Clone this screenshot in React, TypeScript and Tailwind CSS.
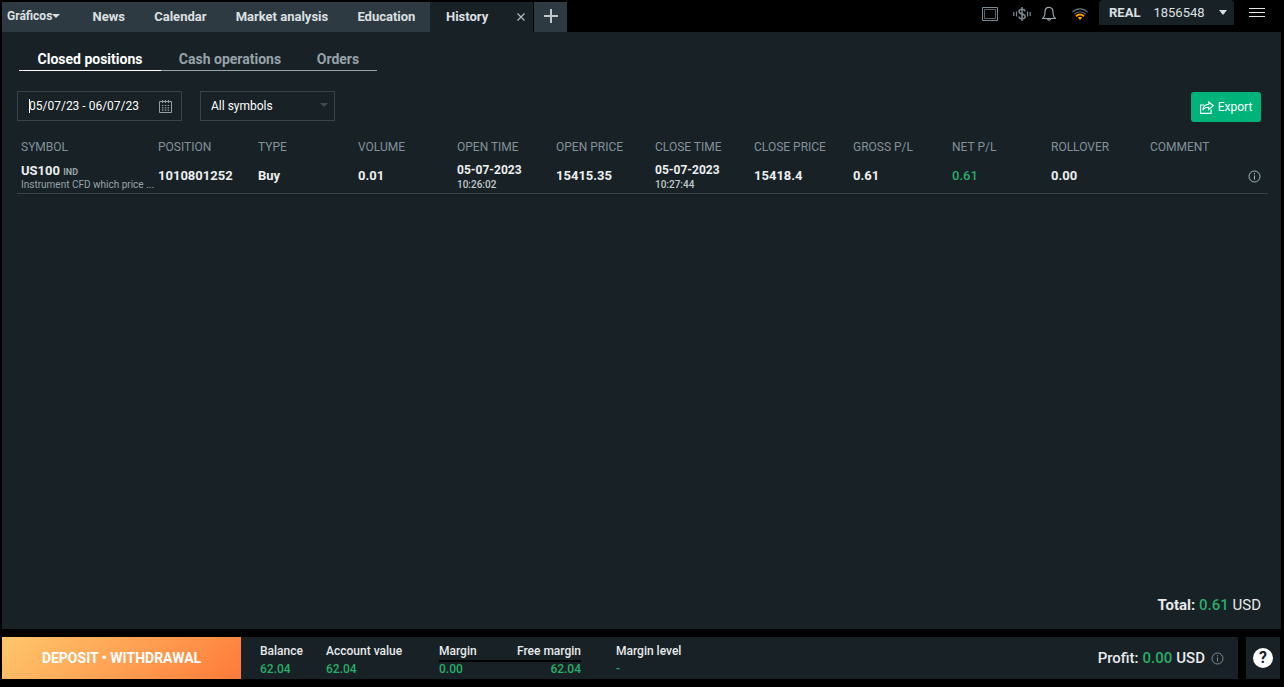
import React from 'react';

const tabs = ['News', 'Calendar', 'Market analysis', 'Education'];

const columns = [
  { label: 'Symbol', width: 'w-[137px]' },
  { label: 'Position', width: 'w-[100px]' },
  { label: 'Type', width: 'w-[100px]' },
  { label: 'Volume', width: 'w-[99px]' },
  { label: 'Open time', width: 'w-[99px]' },
  { label: 'Open price', width: 'w-[99px]' },
  { label: 'Close time', width: 'w-[99px]' },
  { label: 'Close price', width: 'w-[99px]' },
  { label: 'Gross P/L', width: 'w-[99px]' },
  { label: 'Net P/L', width: 'w-[99px]' },
  { label: 'Rollover', width: 'w-[99px]' },
  { label: 'Comment', width: '' },
];

const cell = 'pt-1 pr-0 pb-0 pl-1';
const stackedCell = 'pt-1.5 pr-0 pb-0 pl-1';

const InfoIcon = () => (
  <svg width="13" height="13" viewBox="0 0 13 13" fill="none" stroke="currentColor">
    <circle cx="6.5" cy="6.5" r="5.5" />
    <path d="M6.5 5.5v4M6.5 3.2v1.2" />
  </svg>
);

const TopBar = () => (
  <header className="flex h-8 justify-between pl-0.5">
    <nav className="flex pt-0.5 text-[13px] font-bold text-[#dde0e2]">
      <div className="flex w-[428px] bg-[#2e3a41]">
        <button className="flex w-[76px] shrink-0 items-center pb-0.5 pl-[5px] text-xs font-bold">
          Gráficos
          <svg width="8" height="4" viewBox="0 0 8 4" fill="currentColor">
            <path d="M0 0h8L4 4z" />
          </svg>
        </button>
        {tabs.map((tab) => (
          <button key={tab} className="grow px-3.5 font-bold whitespace-nowrap">{tab}</button>
        ))}
      </div>
      <div className="flex w-[103px] items-center justify-between bg-[#172126] pr-2 pl-4">
        <button className="font-bold">History</button>
        <button aria-label="Close tab">
          <svg width="8" height="8" viewBox="0 0 8 8" stroke="#b4bcc0" strokeWidth="1.2">
            <path d="M.5.5l7 7M7.5.5l-7 7" />
          </svg>
        </button>
      </div>
      <button aria-label="New tab" className="ml-px flex w-[33px] items-center justify-center bg-[#2e3a41] pb-0.5">
        <svg width="14" height="14" viewBox="0 0 14 14" stroke="#c3c8cb" strokeWidth="2">
          <path d="M7 0v14M0 7h14" />
        </svg>
      </button>
    </nav>

    <div className="flex items-start pr-[19px]">
      <div className="flex h-7 items-center text-[#7c8b94]">
        <button aria-label="Layout" className="mr-[15px]">
          <svg width="16" height="14" viewBox="0 0 16 14" fill="none" stroke="currentColor">
            <path d="M.5.5h15v13H.5z" />
            <path d="M2.500 2.500h11v9h-11z" opacity=".7" />
          </svg>
        </button>
        <button aria-label="Price alerts" className="mr-[11px]">
          <svg width="18" height="14" viewBox="0 0 18 14" fill="none" stroke="currentColor" strokeWidth="1.5">
            <path d="M9 0v14M12 4.400C11.800 3 10.700 2.300 9 2.300c-1.800 0-3 .8-3 2.200C6 6 7.200 6.500 9 7c1.900.5 3.100 1 3.100 2.500S10.800 11.800 9 11.800 6 11 5.900 9.500" />
            <path d="M3.500 4.500v5M14.500 4.500v5M.8 5v4M17.200 5v4" strokeWidth="1.2" />
          </svg>
        </button>
        <button aria-label="Notifications" className="mr-4">
          <svg width="14" height="16" viewBox="0 0 14 16" fill="none" stroke="#9ba5ab" strokeWidth="1.2">
            <path d="M7 1.300C4.300 1.300 3 3.300 3 5.800c0 3.700-.3 5.200-2.400 6.700h12.800C11.300 11 11 9.500 11 5.800c0-2.500-1.300-4.500-4-4.500z" />
            <path d="M5.300 12.700a1.800 2 0 0 0 3.400 0" />
          </svg>
        </button>
        <button aria-label="Connection" className="mr-[11px]">
          <svg width="16" height="12" viewBox="0 0 16 12" fill="none">
            <path d="M.5 4.200C4.800-.2 11.200-.2 15.500 4.200" stroke="#66737b" strokeWidth="1.200" />
            <path d="M2.400 6.200c3.200-3.300 8-3.300 11.200 0" stroke="#66737b" strokeWidth="1.100" />
            <path d="M4 8.200c2.300-2.300 5.700-2.300 8 0" stroke="#ff9c0f" strokeWidth="2" />
            <path d="M5.800 9.600c1.300-1.200 3.100-1.200 4.400 0L8 12z" fill="#ff9c0f" />
          </svg>
        </button>
      </div>
      <button className="flex h-[25px] w-[135px] items-center rounded-t bg-[#172126] px-2.5 text-[13px] text-[#dde0e2]">
        <span className="font-bold">REAL</span>
        <span className="ml-[13px]">1856548</span>
        <svg width="8" height="5" viewBox="0 0 8 5" fill="currentColor" className="-mr-[3px] ml-auto">
          <path d="M0 0h8L4 5z" />
        </svg>
      </button>
      <button aria-label="Menu" className="mt-2 ml-[15px]">
        <svg width="16" height="9" viewBox="0 0 16 9" stroke="#e3e5e6">
          <path d="M0 .5h16M0 4.500h16M0 8.500h16" />
        </svg>
      </button>
    </div>
  </header>
);

const Filters = () => (
  <div className="mt-5 flex items-start pr-5 pl-[15px]">
    <label className="relative flex h-[30px] w-[165px] items-center border border-[#34434c] pr-[9px] pl-[11px]">
      <input
        aria-label="Date range"
        defaultValue="05/07/23 - 06/07/23"
        className="w-[120px] bg-transparent text-xs text-white outline-none"
      />
      <span className="absolute top-[7px] left-[11px] h-3.5 w-px bg-white" />
      <svg width="13" height="13" viewBox="0 0 13 13" fill="none" stroke="#93a0a7" className="ml-auto shrink-0">
        <path d="M.5 1.500h12v11H.5zM3.500 0v3M6.500 0v3M9.500 0v3" />
        <path d="M3 5.500h1.400M5.800 5.500h1.400M8.600 5.500H10M3 7.800h1.400M5.800 7.800h1.400M8.600 7.800H10M3 10.100h1.400M5.800 10.100h1.400M8.600 10.100H10" strokeWidth="1.200" />
      </svg>
    </label>
    <div className="relative ml-[18px]">
      <select
        aria-label="Symbols"
        className="block h-[30px] w-[135px] appearance-none border border-[#34434c] bg-transparent px-2.5 text-xs text-white outline-none"
      >
        <option>All symbols</option>
      </select>
      <svg width="8" height="4" viewBox="0 0 8 4" fill="#3d4b54" className="pointer-events-none absolute top-3 right-[7px]">
        <path d="M0 0h8L4 4z" />
      </svg>
    </div>
    <button className="mt-px ml-auto flex h-[30px] w-[70px] items-center justify-center gap-1 rounded-[3px] bg-[#00b379] text-xs text-white">
      <svg width="14" height="13" viewBox="0 0 14 13" fill="none" stroke="currentColor" strokeWidth="1.100">
        <path d="M4 4H.6v8.400h10.500V8.500" />
        <path d="M8.700 1l4.600 3.700-4.600 3.800V6.300C6 6.200 4.200 6.900 2.900 9c.2-3.300 2.300-5.400 5.800-5.700z" />
      </svg>
      Export
    </button>
  </div>
);

const DateTime = ({ date, time }: { date: string; time: string }) => (
  <td className={stackedCell}>
    <div className="text-xs leading-4">{date}</div>
    <div className="text-[10px] leading-[14px] font-medium text-[#c3cacd]">{time}</div>
  </td>
);

const PositionsTable = () => (
  <div className="mt-4 pr-[13px] pl-[15px]">
    <table className="w-full table-fixed text-left text-[13px] leading-4 font-bold text-[#edeff0]">
      <thead>
        <tr className="h-[18px] text-xs text-[#84919a]">
          {columns.map((col) => (
            <th key={col.label} className={`${col.width} p-0 pl-1 font-normal uppercase`}>{col.label}</th>
          ))}
          <th aria-label="Details" className="w-8 p-0" />
        </tr>
      </thead>
      <tbody>
        <tr className="h-[37px] border-b border-[#34434c]">
          <td className={stackedCell}>
            <div className="leading-[14px]">
              US100 <span className="text-[9px] text-[#99a4aa]">IND</span>
            </div>
            <div className="text-[10px] leading-3 font-normal whitespace-nowrap text-[#99a4aa]">Instrument CFD which price ...</div>
          </td>
          <td className={cell}>1010801252</td>
          <td className={cell}>Buy</td>
          <td className={cell}>0.01</td>
          <DateTime date="05-07-2023" time="10:26:02" />
          <td className={cell}>15415.35</td>
          <DateTime date="05-07-2023" time="10:27:44" />
          <td className={cell}>15418.4</td>
          <td className={cell}>0.61</td>
          <td className={`${cell} font-medium text-[#27ae68]`}>0.61</td>
          <td className={cell}>0.00</td>
          <td className={cell} />
          <td className="pt-1 pr-0 pb-0 pl-3">
            <button aria-label="Position details" className="flex text-[#a7b8c1]">
              <InfoIcon />
            </button>
          </td>
        </tr>
      </tbody>
    </table>
  </div>
);

const Stat = ({ label, value, className, line = 'border-transparent' }: { label: string; value: string; className: string; line?: string }) => (
  <div className={className}>
    <dt className="whitespace-nowrap">{label}</dt>
    <dd className={`${line} border-t-2 leading-[14px] text-[#27ae68]`}>{value}</dd>
  </div>
);

const Footer = () => (
  <footer className="mt-2 flex h-[42px] gap-2 pr-1 pl-0.5">
    <div className="flex grow bg-[#172126]">
      <button className="w-[239px] bg-linear-135 from-[#ffc66c] to-[#ff7a38] text-sm font-bold text-white">
        DEPOSIT • WITHDRAWAL
      </button>
      <dl className="flex pt-[5px] pl-[19px] text-xs leading-[18px] font-medium text-[#e8eaeb]">
        <Stat label="Balance" value="62.04" className="w-[66px]" />
        <Stat label="Account value" value="62.04" className="w-[113px]" />
        <Stat label="Margin" value="0.00" className="w-[76px]" line="border-black" />
        <Stat label="Free margin" value="62.04" className="w-[66px] text-right" line="border-black" />
        <Stat label="Margin level" value="-" className="ml-[35px]" />
      </dl>
      <div className="ml-auto flex items-center gap-1 pr-3.5 text-[15px] font-medium text-[#e8eaeb]">
        Profit: <span className="text-[#27ae68]">0.00</span> USD
        <button aria-label="Profit details" className="ml-0.5 text-[#7f8b92]">
          <InfoIcon />
        </button>
      </div>
    </div>
    <div className="flex w-[34px] items-center justify-center bg-[#172126]">
      <button className="size-5 rounded-full bg-white text-base leading-5 font-bold text-[#172126]">?</button>
    </div>
  </footer>
);

const App = () => {
  return (
    <div className="flex min-h-screen flex-col bg-black pb-2 font-['Roboto',sans-serif]">
      <TopBar />
      <main className="mr-[3px] ml-0.5 flex grow flex-col bg-[#172126]">
        <nav className="mt-4 ml-[17px] flex self-start text-sm font-bold text-[#98a3a9]">
          <a href="#closed" className="w-[142px] border-b border-white pt-px pb-px text-center text-white">Closed positions</a>
          <a href="#cash" className="w-[138px] border-b border-[#98a3a9] pt-px pb-px text-center">Cash operations</a>
          <a href="#orders" className="w-[78px] border-b border-[#98a3a9] pt-px pb-px text-center">Orders</a>
        </nav>
        <Filters />
        <PositionsTable />
        <p className="mt-auto pr-5 pb-[13px] text-right text-[15px] text-[#e8eaeb]">
          <span className="font-bold">Total: </span>
          <span className="font-medium text-[#27ae68]">0.61</span> USD
        </p>
      </main>
      <Footer />
    </div>
  );
};

export default App;
